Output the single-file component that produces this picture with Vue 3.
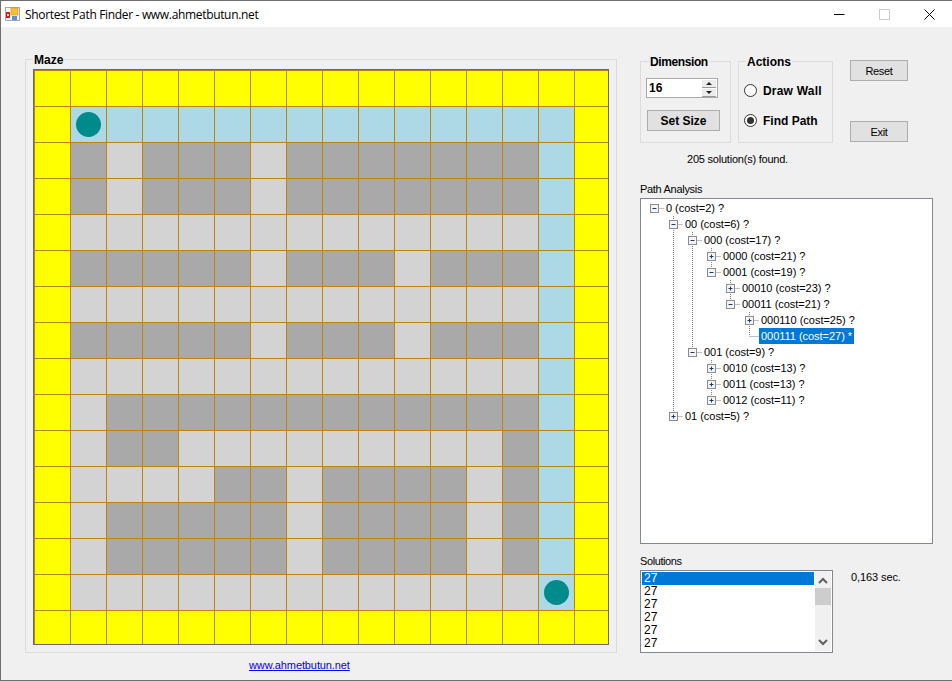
<script setup>
import { computed } from "vue";

// Y border, B found path, L free, G wall, S start / end point
const mazeRows = [
  "YYYYYYYYYYYYYYYY",
  "YSBBBBBBBBBBBBBY",
  "YGLGGGLGGGGGGGBY",
  "YGLGGGLGGGGGGGBY",
  "YLLLLLLLLLLLLLBY",
  "YGGGGGLGGGLGGGBY",
  "YLLLLLLLLLLLLLBY",
  "YGGGGGLGGGLGGGBY",
  "YLLLLLLLLLLLLLBY",
  "YLGGGGGGGGGGGGBY",
  "YLGGLLLLLLLLLGBY",
  "YLLLLGGLGGGGLGBY",
  "YLGGGGGLGGGGLGBY",
  "YLGGGGGLGGGGLGBY",
  "YLLLLLLLLLLLLLSY",
  "YYYYYYYYYYYYYYYY"
];

const cells = computed(() => mazeRows.flatMap((row) => row.split("")));

const tree = {
  id: "0", cost: 2, open: true, children: [
    {
      id: "00", cost: 6, open: true, children: [
        {
          id: "000", cost: 17, open: true, children: [
            { id: "0000", cost: 21, children: [{}] },
            {
              id: "0001", cost: 19, open: true, children: [
                { id: "00010", cost: 23, children: [{}] },
                {
                  id: "00011", cost: 21, open: true, children: [
                    { id: "000110", cost: 25, children: [{}] },
                    { id: "000111", cost: 27, mark: "*", selected: true }
                  ]
                }
              ]
            }
          ]
        },
        {
          id: "001", cost: 9, open: true, children: [
            { id: "0010", cost: 13, children: [{}] },
            { id: "0011", cost: 13, children: [{}] },
            { id: "0012", cost: 11, children: [{}] }
          ]
        }
      ]
    },
    { id: "01", cost: 5, children: [{}] }
  ]
};

const INDENT = 19;

// flatten the tree, keeping which ancestor guide lines go through every row
const flatten = (node, depth, guides, hasNext, out) => {
  out.push({ ...node, depth, guides, hasNext });
  if (node.open) {
    node.children.forEach((child, i) => {
      const next = guides.slice();
      if (depth > 0 && hasNext) next.push(depth);
      flatten(child, depth + 1, next, i < node.children.length - 1, out);
    });
  }
  return out;
};

const treeRows = computed(() => flatten(tree, 0, [], false, []));

const colX = (depth) => depth * INDENT + 9.5;

const solutions = [27, 27, 27, 27, 27, 27];
</script>

<template>
  <div class="window">
    <div class="titlebar">
      <svg class="app-icon" width="15" height="14" viewBox="0 0 15 14">
        <rect x="0.5" y="0.5" width="14" height="13" fill="#f4f4f4" stroke="#a8a8a8" />
        <rect x="1" y="5" width="4" height="6" fill="#d8201c" />
        <rect x="2" y="7" width="2" height="2" fill="#f8d0c8" />
        <rect x="6" y="1" width="7" height="7" fill="#f7c22e" stroke="#c08a10" stroke-width="0.5" />
        <rect x="7" y="9" width="5" height="4" fill="#5b8fdc" />
      </svg>
      <span class="title-text">Shortest Path Finder - www.ahmetbutun.net</span>
      <div class="win-buttons">
        <span class="win-btn">
          <svg width="11" height="11" viewBox="0 0 11 11"><path d="M0 5.5h10.5" stroke="#000" fill="none" /></svg>
        </span>
        <span class="win-btn">
          <svg width="11" height="11" viewBox="0 0 11 11"><rect x="0.5" y="0.5" width="10" height="10" stroke="#ccc" fill="none" /></svg>
        </span>
        <span class="win-btn">
          <svg width="11" height="11" viewBox="0 0 11 11"><path d="M0.5 0.5l10 10M10.5 0.5l-10 10" stroke="#000" fill="none" /></svg>
        </span>
      </div>
    </div>

    <div class="content">
      <div class="left">
        <div class="group maze-group">
          <div class="group-title maze-title">Maze</div>
          <div class="board">
            <div
              v-for="(cell, i) in cells"
              :key="i"
              class="cell"
              :class="'cell-' + cell"
            >
              <span v-if="cell === 'S'" class="point"></span>
            </div>
          </div>
        </div>
        <a class="site-link" href="#">www.ahmetbutun.net</a>
      </div>

      <div class="right">
        <div class="top-row">
          <div class="group dimension">
            <div class="group-title dimension-title">Dimension</div>
            <div class="spinner">
              <span class="spinner-value">16</span>
              <div class="spin-btns">
                <span class="spin-btn"><i class="arrow-up"></i></span>
                <span class="spin-btn"><i class="arrow-down"></i></span>
              </div>
            </div>
            <button class="btn btn-bold">Set Size</button>
          </div>

          <div class="group actions">
            <div class="group-title actions-title">Actions</div>
            <label class="radio-row first">
              <span class="radio"></span>
              <span>Draw Wall</span>
            </label>
            <label class="radio-row">
              <span class="radio checked"></span>
              <span>Find Path</span>
            </label>
          </div>

          <div class="side-buttons">
            <button class="btn">Reset</button>
            <button class="btn">Exit</button>
          </div>
        </div>

        <div class="status">205 solution(s) found.</div>

        <div class="field-label analysis-label">Path Analysis</div>
        <div class="tree">
          <div v-for="row in treeRows" :key="row.id" class="tree-row">
            <svg :width="(row.depth + 1) * INDENT" height="16" class="tree-prefix">
              <path
                v-for="g in row.guides"
                :key="g"
                :d="`M${colX(g)} 0V16`"
                class="dots"
              />
              <path
                v-if="row.depth > 0"
                :d="`M${colX(row.depth)} 0V${row.hasNext ? 16 : 8}`"
                class="dots"
              />
              <path
                :d="`M${colX(row.depth)} 8.5H${colX(row.depth) + 9.5}`"
                class="dots"
              />
              <template v-if="row.children">
                <rect
                  :x="colX(row.depth) - 4"
                  y="4.5"
                  width="8"
                  height="8"
                  fill="#f4f4f4"
                  stroke="#8c8c8c"
                />
                <path
                  :d="`M${colX(row.depth) - 2} 8.5h4`"
                  stroke="#1f3a6e"
                  fill="none"
                />
                <path
                  v-if="!row.open"
                  :d="`M${colX(row.depth)} 6.5v4`"
                  stroke="#1f3a6e"
                  fill="none"
                />
              </template>
            </svg>
            <span class="tree-label" :class="{ selected: row.selected }">
              {{ row.id }} (cost={{ row.cost }}) {{ row.mark || "?" }}
            </span>
          </div>
        </div>

        <div class="field-label solutions-label">Solutions</div>
        <div class="solutions-row">
          <div class="listbox">
            <div class="list-items">
              <div
                v-for="(s, i) in solutions"
                :key="i"
                class="list-item"
                :class="{ selected: i === 0 }"
              >
                {{ s }}
              </div>
            </div>
            <div class="scrollbar">
              <svg width="16" height="17" viewBox="0 0 16 17">
                <path d="M4 12l4-4 4 4" stroke="#606060" stroke-width="2" fill="none" />
              </svg>
              <span class="thumb"></span>
              <svg class="scroll-down" width="16" height="17" viewBox="0 0 16 17">
                <path d="M4 6l4 4 4-4" stroke="#606060" stroke-width="2" fill="none" />
              </svg>
            </div>
          </div>
          <div class="elapsed">0,163 sec.</div>
        </div>
      </div>
    </div>
  </div>
</template>

<style scoped>
.window {
  width: 952px;
  height: 681px;
  box-sizing: border-box;
  display: flex;
  flex-direction: column;
  border-top: 1px solid #6f6f6f;
  border-bottom: 1px solid #6f6f6f;
  border-left: 1px solid #6f6f6f;
  font-family: "Liberation Sans", Arial, sans-serif;
  font-size: 11px;
  color: #000;
  background: #f0f0f0;
  overflow: hidden;
}

.titlebar {
  height: 26px;
  flex: none;
  display: flex;
  align-items: center;
  background: #fff;
}

.app-icon {
  margin-left: 4px;
  flex: none;
}

.title-text {
  margin-left: 5px;
  font-family: "Open Sans", sans-serif;
  font-size: 12px;
  letter-spacing: -0.33px;
  color: #000;
}

.win-buttons {
  margin-left: auto;
  display: flex;
}

.win-btn {
  width: 45px;
  height: 26px;
  display: flex;
  align-items: center;
  justify-content: center;
}

.content {
  flex: 1;
  display: flex;
  padding: 32px 0 0 24px;
}

.group {
  box-sizing: border-box;
  border: 1px solid #dcdcdc;
}

.group-title {
  width: fit-content;
  height: 14px;
  line-height: 14px;
  margin: -7px 0 0 8px;
  padding: 0 1px;
  background: #f0f0f0;
  font-size: 12px;
  font-weight: bold;
}

.dimension-title {
  letter-spacing: -0.4px;
}

.actions-title {
  margin-left: 7px;
}

.maze-group {
  width: 592px;
  height: 594px;
  padding-left: 7px;
}

.maze-title {
  margin-left: 0;
  padding-left: 1px;
}

.board {
  box-sizing: border-box;
  width: 576px;
  height: 576px;
  margin-top: 2px;
  border: 1px solid #696969;
  display: grid;
  grid-template-columns: repeat(15, 36px) 34px;
  grid-template-rows: repeat(15, 36px) 34px;
}

.cell {
  box-sizing: border-box;
  border-left: 1px solid #b8860b;
  border-top: 1px solid #b8860b;
  padding: 5px;
}

.cell-Y { background: #ffff00; }
.cell-B, .cell-S { background: #add8e6; }
.cell-L { background: #d3d3d3; }
.cell-G { background: #a9a9a9; }

.point {
  display: block;
  width: 25px;
  height: 25px;
  border-radius: 50%;
  background: #008b8b;
}

.left {
  width: 592px;
  flex: none;
}

.site-link {
  display: block;
  width: fit-content;
  margin: 6px 0 0 224px;
  line-height: 13px;
  letter-spacing: -0.11px;
  color: #0000ff;
  text-decoration: underline;
}

.right {
  margin-left: 23px;
  width: 293px;
  flex: none;
  padding-top: 2px;
}

.top-row {
  display: flex;
}

.dimension {
  width: 91px;
  height: 82px;
}

.spinner {
  box-sizing: border-box;
  width: 72px;
  height: 20px;
  margin: 9px 0 0 5px;
  display: flex;
  align-items: center;
  justify-content: space-between;
  background: #fff;
  border: 1px solid #a9a9a9;
  padding: 0 1px 0 2px;
}

.spinner-value {
  font-size: 12px;
  font-weight: bold;
}

.spin-btns {
  width: 14px;
  display: flex;
  flex-direction: column;
  gap: 1px;
}

.spin-btn {
  height: 8px;
  display: flex;
  align-items: center;
  justify-content: center;
  background: #ececec;
  border-bottom: 1px solid #9a9a9a;
  box-sizing: border-box;
}

.arrow-up, .arrow-down {
  width: 0;
  height: 0;
  border-left: 3px solid transparent;
  border-right: 3px solid transparent;
}

.arrow-up { border-bottom: 3px solid #222; }
.arrow-down { border-top: 3px solid #222; }

.btn {
  display: block;
  box-sizing: border-box;
  height: 21px;
  width: 58px;
  padding: 0;
  background: #e1e1e1;
  border: 1px solid #adadad;
  font-family: inherit;
  font-size: 11px;
  letter-spacing: -0.3px;
  color: #000;
}

.btn-bold {
  width: 73px;
  margin: 12px 0 0 6px;
  font-size: 12px;
  font-weight: bold;
  letter-spacing: 0;
}

.actions {
  width: 95px;
  height: 82px;
  margin-left: 7px;
}

.radio-row {
  display: flex;
  align-items: center;
  gap: 6px;
  height: 13px;
  margin: 17px 0 0 5px;
  font-size: 12px;
  font-weight: bold;
}

.radio-row.first {
  margin-top: 15px;
  letter-spacing: 0.2px;
}

.radio {
  box-sizing: border-box;
  width: 13px;
  height: 13px;
  flex: none;
  border: 1px solid #333;
  border-radius: 50%;
  background: #fff;
  display: flex;
  align-items: center;
  justify-content: center;
}

.radio.checked::after {
  content: "";
  width: 7px;
  height: 7px;
  border-radius: 50%;
  background: #333;
}

.side-buttons {
  margin: -1px 0 0 17px;
  height: 82px;
  display: flex;
  flex-direction: column;
  justify-content: space-between;
}

.status {
  margin: 10px 0 0 47px;
  line-height: 13px;
  letter-spacing: -0.22px;
}

.field-label {
  line-height: 13px;
  letter-spacing: -0.3px;
}

.analysis-label {
  margin-top: 17px;
}

.tree {
  box-sizing: border-box;
  margin-top: 2px;
  width: 293px;
  height: 346px;
  padding: 1px 0 0 4px;
  border: 1px solid #828790;
  background: #fff;
}

.tree-row {
  display: flex;
  height: 16px;
}

.tree-prefix {
  flex: none;
}

.dots {
  stroke: #808080;
  stroke-dasharray: 1 1;
  fill: none;
}

.tree-label {
  padding: 0 2px;
  line-height: 16px;
  letter-spacing: -0.03px;
  white-space: nowrap;
}

.tree-label.selected {
  background: #0078d7;
  color: #fff;
}

.solutions-label {
  margin-top: 11px;
  letter-spacing: -0.4px;
}

.solutions-row {
  display: flex;
  margin-top: 2px;
}

.listbox {
  box-sizing: border-box;
  width: 193px;
  height: 83px;
  display: flex;
  justify-content: space-between;
  padding: 0 1px 1px 1px;
  border: 1px solid #828790;
  background: #fff;
}

.list-items {
  width: 172px;
  padding-top: 1px;
}

.list-item {
  height: 13px;
  line-height: 13px;
  padding-left: 2px;
  font-size: 12px;
}

.list-item.selected {
  background: #0078d7;
  color: #fff;
}

.scrollbar {
  width: 16px;
  display: flex;
  flex-direction: column;
  background: #f0f0f0;
}

.thumb {
  height: 17px;
  background: #cdcdcd;
}

.scroll-down {
  margin-top: auto;
}

.elapsed {
  margin: 1px 0 0 18px;
  line-height: 13px;
  letter-spacing: -0.1px;
}
</style>

<style>
html, body {
  margin: 0;
  overflow: hidden;
  background: #f0f0f0;
}
</style>
